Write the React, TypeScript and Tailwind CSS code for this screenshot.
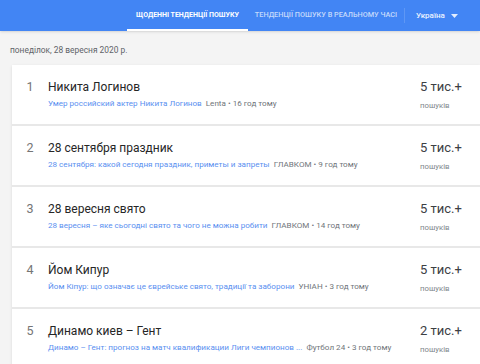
interface Trend {
  rank: number;
  title: string;
  article: string;
  source: string;
  time: string;
  count: string;
}

const trends: Trend[] = [
  { rank: 1, title: 'Никита Логинов', article: 'Умер российский актер Никита Логинов', source: 'Lenta', time: '16 год тому', count: '5 тис.+' },
  { rank: 2, title: '28 сентября праздник', article: '28 сентября: какой сегодня праздник, приметы и запреты', source: 'ГЛАВКОМ', time: '9 год тому', count: '5 тис.+' },
  { rank: 3, title: '28 вересня свято', article: '28 вересня – яке сьогодні свято та чого не можна робити', source: 'ГЛАВКОМ', time: '14 год тому', count: '5 тис.+' },
  { rank: 4, title: 'Йом Кипур', article: 'Йом Кіпур: що означає це єврейське свято, традиції та заборони', source: 'УНІАН', time: '3 год тому', count: '5 тис.+' },
  { rank: 5, title: 'Динамо киев – Гент', article: 'Динамо – Гент: прогноз на матч квалификации Лиги чемпионов ...', source: 'Футбол 24', time: '3 год тому', count: '2 тис.+' },
];

const App = () => {
  return (
    <div className="h-[364px] w-[480px] overflow-hidden bg-[#f4f4f4] font-['Roboto',sans-serif]">
      {/* Header */}
      <div className="flex h-[31px] items-stretch bg-[#4285f4] shadow-sm">
        <div className="w-[127px]" />
        <div className="flex w-[121px] items-center justify-center border-b-[2px] border-white pt-[2px] text-[7px] font-bold text-white">
          ЩОДЕННІ ТЕНДЕНЦІЇ ПОШУКУ
        </div>
        <div className="flex w-[156px] items-center justify-center text-[7.3px] font-medium text-white/70">
          ТЕНДЕНЦІЇ ПОШУКУ В РЕАЛЬНОМУ ЧАСІ
        </div>
        <div className="my-[8px] w-px bg-white/15" />
        <div className="flex items-center gap-[6px] pl-[11px] text-[8px] font-medium text-white/90">
          <span>Україна</span>
          <svg width="7" height="4" viewBox="0 0 7 4">
            <path d="M0 0 L7 0 L3.5 4 Z" fill="#ffffff" fillOpacity="0.85" />
          </svg>
        </div>
      </div>

      {/* Date */}
      <div className="pl-[10px] pt-[13px] text-[8.4px] leading-[12px] text-[#5f6368]">
        понеділок, 28 вересня 2020 р.
      </div>

      {/* List */}
      <div className="ml-[12px] mt-[9px] flex flex-col gap-[2px] bg-[#e8e8e8] shadow-sm">
        {trends.map((t) => (
          <div key={t.rank} className="flex h-[59px] items-start bg-white">
            <div className="w-[36px] pt-[14px] text-center text-[12.5px] leading-[16px] text-[#757575]">
              {t.rank}
            </div>
            <div className="min-w-0 flex-1 pt-[14px]">
              <div className="text-[12px] leading-[16px] text-[#262626]">{t.title}</div>
              <div className="mt-[3px] flex items-center whitespace-nowrap text-[8.1px] leading-[11px]">
                <span className="text-[#5a8ff0]">{t.article}</span>
                <span className="ml-[4px] text-[#70757a]">
                  {t.source} • {t.time}
                </span>
              </div>
            </div>
            <div className="w-[60px] pt-[14px]">
              <div className="text-[13px] leading-[16px] text-[#3c4043]">{t.count}</div>
              <div className="mt-[5px] text-[7.8px] leading-[11px] text-[#80868b]">пошуків</div>
            </div>
          </div>
        ))}
      </div>
    </div>
  );
};

export default App;
